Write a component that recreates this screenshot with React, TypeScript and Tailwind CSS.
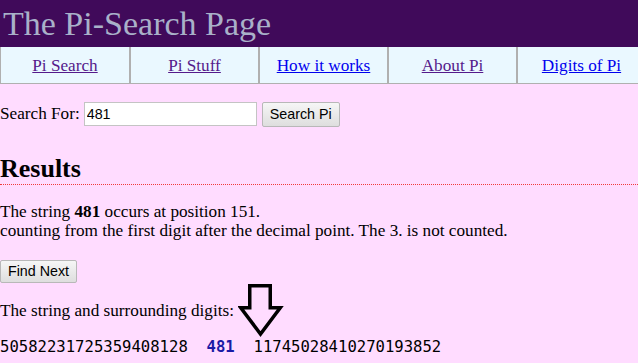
import React from 'react';

const navLinks = [
  { label: 'Pi Search', visited: true },
  { label: 'Pi Stuff', visited: true },
  { label: 'How it works', visited: false },
  { label: 'About Pi', visited: true },
  { label: 'Digits of Pi', visited: false },
];

const DownArrow: React.FC = () => (
  <svg
    width="46"
    height="56"
    viewBox="0 0 46 56"
    className="absolute left-[238px] top-[-19px]"
  >
    <polygon
      points="11.75,3.75 32.25,3.75 32.25,25.75 42.25,25.75 22.5,52 2.75,25.75 11.75,25.75"
      fill="none"
      stroke="#000"
      strokeWidth="3.5"
      strokeLinejoin="miter"
    />
  </svg>
);

const App: React.FC = () => {
  return (
    <div className="min-h-screen w-full overflow-hidden bg-[#ffdcff] font-['Liberation_Serif',serif] text-[17.2px] text-black">
      <header className="h-[47px] bg-[#400a5a] pl-[3px] text-[34px] leading-[47px] text-[#a9b1c9]">
        The Pi-Search Page
      </header>

      <nav className="grid w-[645px] grid-cols-5 border-b border-[#b0b0b0] bg-[#eaf8ff]">
        {navLinks.map((link, i) => (
          <div
            key={link.label}
            className={`flex h-[36px] items-center justify-center ${i === 0 ? 'border-l' : 'border-l-2'} border-[#b0b0b0]`}
          >
            <a
              href="#"
              className={`underline leading-[19px] ${link.visited ? 'text-[#551a8b]' : 'text-[#0000ee]'}`}
            >
              {link.label}
            </a>
          </div>
        ))}
      </nav>

      <form className="mt-[18px] flex items-baseline" onSubmit={(e) => e.preventDefault()}>
        <span className="leading-[19px]">Search For:</span>
        <input
          type="text"
          defaultValue="481"
          className="ml-[4px] h-[24px] w-[173px] border border-[#c4c4c4] bg-white px-[2px] font-['Liberation_Sans',Arial,sans-serif] text-[14.3px] outline-none"
        />
        <button
          type="submit"
          className="ml-[5px] h-[25px] w-[78px] rounded-[2px] border border-[#b8b8b8] bg-gradient-to-b from-[#f6f6f6] to-[#dedede] font-['Liberation_Sans',Arial,sans-serif] text-[14.3px] text-black"
        >
          Search Pi
        </button>
      </form>

      <h2 className="mt-[28px] border-b border-dotted border-[#f03a3a] pb-[1px] text-[26px] font-bold leading-[28px]">
        Results
      </h2>

      <p className="mt-[17px] leading-[19px]">
        The string <b>481</b> occurs at position 151.
        <br />
        counting from the first digit after the decimal point. The 3. is not counted.
      </p>

      <button
        type="button"
        className="mt-[20px] block h-[23px] w-[77px] rounded-[2px] border border-[#b8b8b8] bg-gradient-to-b from-[#f6f6f6] to-[#dedede] font-['Liberation_Sans',Arial,sans-serif] text-[14.3px] text-black"
      >
        Find Next
      </button>

      <div className="relative mt-[18px] leading-[19px]">
        The string and surrounding digits:
        <DownArrow />
      </div>

      <pre className="mt-[18px] font-['DejaVu_Sans_Mono',monospace] text-[15.6px] leading-[19px] text-black">
        {'50582231725359408128  '}
        <b className="text-[#1a1aa6]">481</b>
        {'  11745028410270193852'}
      </pre>
    </div>
  );
};

export default App;
